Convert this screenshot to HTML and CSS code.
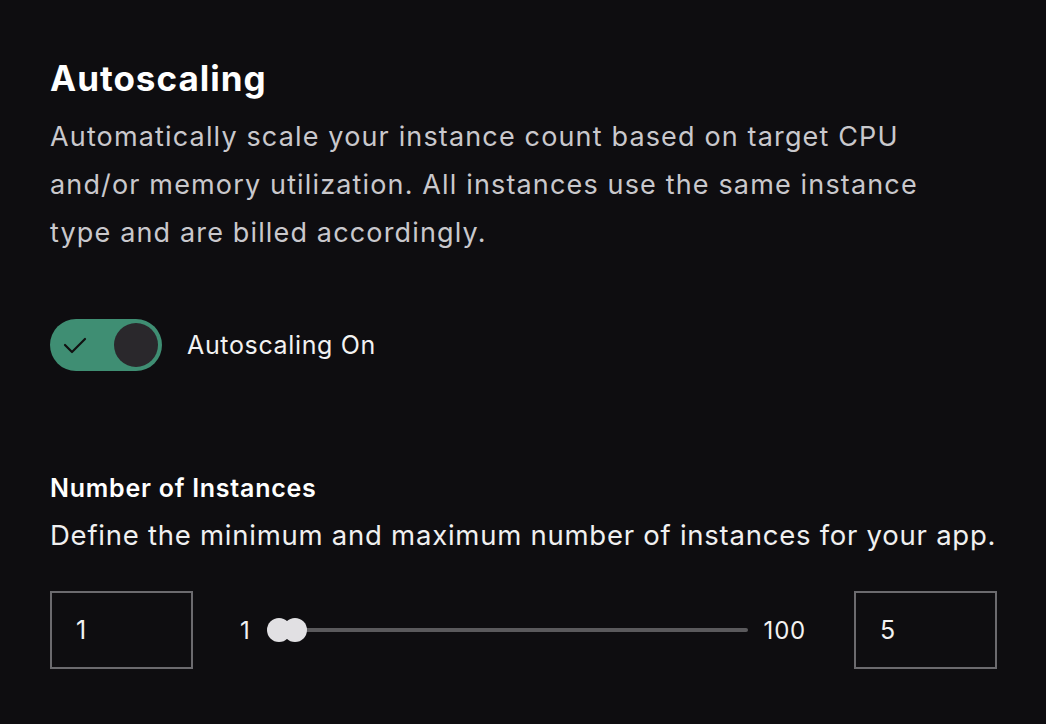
FILE: index.html
```html
<!DOCTYPE html>
<html lang="en">
<head>
  <meta charset="UTF-8" />
  <title>Autoscaling</title>
  <link rel="stylesheet" href="styles.css">
</head>
<body>
  <main class="panel">
    <section class="intro">
      <h1>Autoscaling</h1>
      <p>Automatically scale your instance count based on target CPU and/or memory utilization. All instances use the same instance type and are billed accordingly.</p>
    </section>

    <label class="switch-row">
      <span class="switch on">
        <svg class="check" width="26" height="20" viewBox="0 0 26 20">
          <path d="M3 10 L10 17 L23 4" fill="none" stroke="#111" stroke-width="2.2" stroke-linecap="round" stroke-linejoin="round"/>
        </svg>
        <span class="knob"></span>
      </span>
      <span class="switch-label">Autoscaling On</span>
    </label>

    <section class="instances">
      <h2>Number of Instances</h2>
      <p>Define the minimum and maximum number of instances for your app.</p>
      <div class="range-row">
        <div class="num-box">1</div>
        <span class="range-min">1</span>
        <div class="slider">
          <span class="thumb"></span>
          <span class="thumb second"></span>
          <span class="track"></span>
        </div>
        <span class="range-max">100</span>
        <div class="num-box">5</div>
      </div>
    </section>
  </main>
</body>
</html>
```

FILE: styles.css
```css
* {
  margin: 0;
  padding: 0;
  box-sizing: border-box;
}
body {
  background: #0e0d10;
  color: #fff;
  font-family: Inter, "Liberation Sans", sans-serif;
  height: 100vh;
  overflow: hidden;
}
.panel {
  padding: 56px 49px 0 50px;
}
.intro h1 {
  font-size: 35px;
  font-weight: 700;
  letter-spacing: 1px;
  line-height: 44px;
}
.intro p {
  margin-top: 13px;
  font-size: 27px;
  line-height: 48px;
  color: #c9c8cc;
  max-width: 880px;
  letter-spacing: 1.15px;
}
.switch-row {
  display: flex;
  align-items: center;
  gap: 25px;
  margin-top: 62px;
}
.switch {
  display: flex;
  align-items: center;
  justify-content: space-between;
  width: 112px;
  height: 52px;
  border-radius: 26px;
  background: #3f8e73;
  padding: 0 4px 0 12px;
}
.knob {
  width: 44px;
  height: 44px;
  border-radius: 50%;
  background: #2a282c;
}
.switch-label {
  font-size: 25px;
  color: #f2f2f2;
  letter-spacing: 0.65px;
}
.instances {
  margin-top: 100px;
}
.instances h2 {
  font-size: 25px;
  font-weight: 600;
  letter-spacing: 0.75px;
  line-height: 34px;
}
.instances p {
  margin-top: 11px;
  font-size: 27.5px;
  line-height: 38px;
  color: #f0f0f0;
  letter-spacing: 0.75px;
}
.range-row {
  display: flex;
  align-items: center;
  margin-top: 37px;
}
.num-box {
  width: 143px;
  height: 78px;
  border: 2px solid #6b6a6e;
  font-size: 25px;
  padding-left: 24px;
  display: flex;
  align-items: center;
  color: #f2f2f2;
}
.range-min {
  font-size: 24px;
  margin-left: 47px;
  color: #f2f2f2;
}
.slider {
  position: relative;
  display: flex;
  align-items: center;
  width: 481px;
  height: 24px;
  margin-left: 17px;
}
.track {
  flex: 1;
  height: 4px;
  background: #5a595c;
  border-radius: 2px;
  margin-left: 30px;
}
.thumb {
  position: absolute;
  left: 0;
  top: 0;
  width: 24px;
  height: 24px;
  border-radius: 50%;
  background: #e1e0e3;
}
.thumb.second {
  left: 16px;
}
.range-max {
  font-size: 24px;
  margin-left: 16px;
  margin-right: 48px;
  letter-spacing: 0.8px;
  color: #f2f2f2;
}
```
